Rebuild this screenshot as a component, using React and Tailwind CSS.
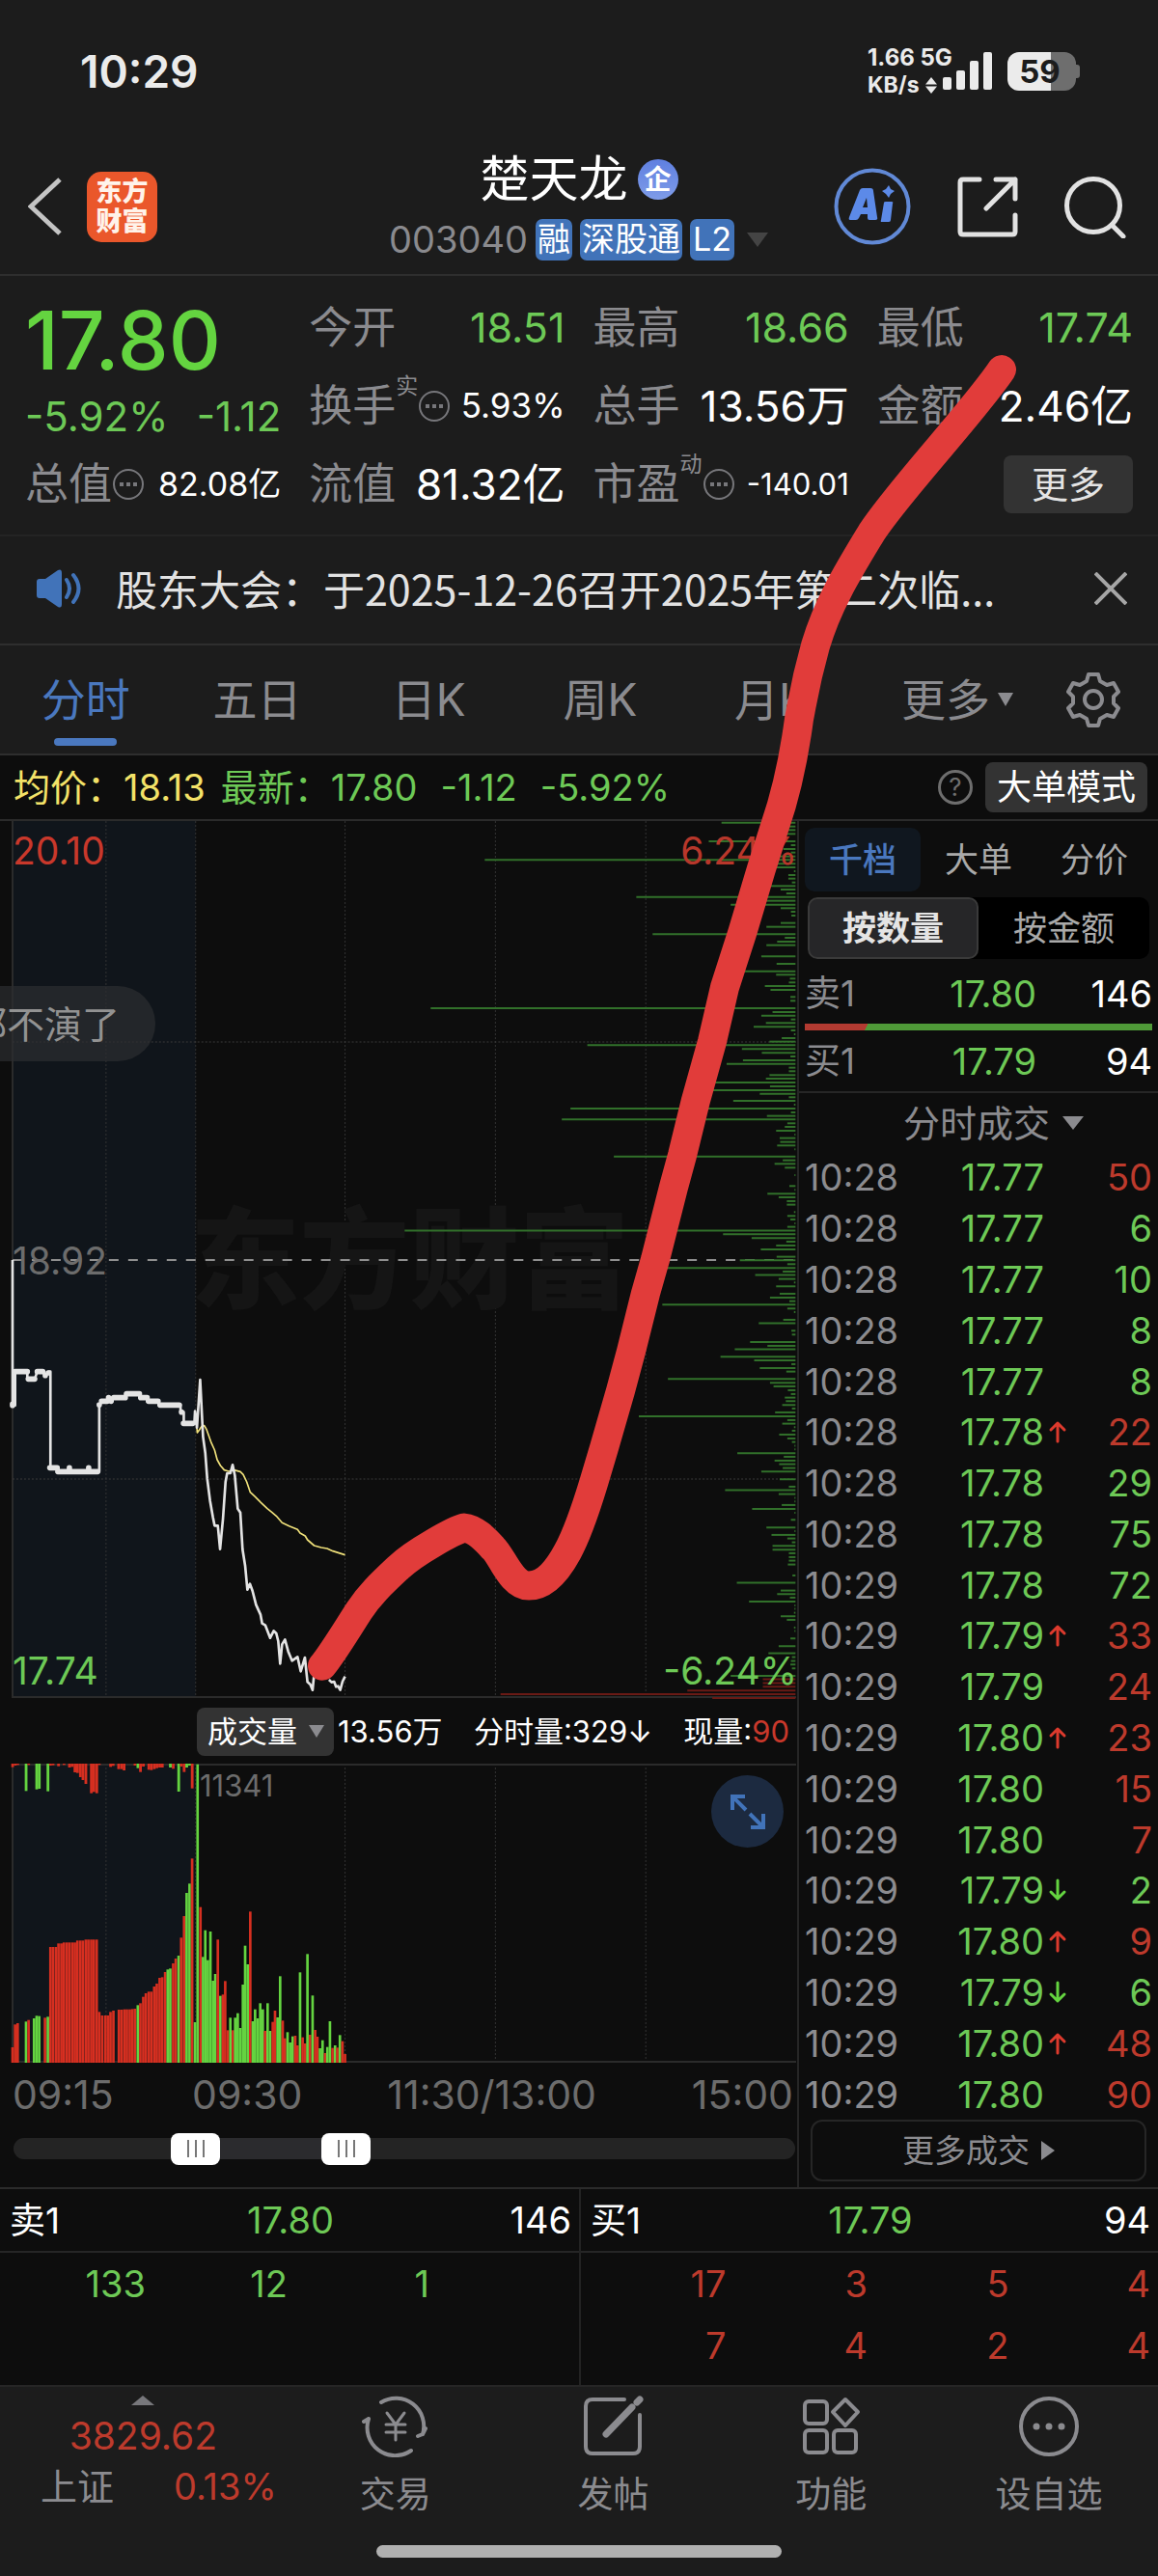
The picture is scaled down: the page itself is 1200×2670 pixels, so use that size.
import React from "react";

const GREEN = "#64d440";
const RED = "#d62f20";

/* Order depth drawn from the right edge: [row, bar start]. */
const depthGreen = [
  [35, 1414], [47, 1545], [58, 1545], [70, 1530], [93, 1389], [105, 1550], [117, 1535], [128, 1550], [140, 1520], [151, 950],
  [163, 1490], [174, 1522], [186, 1556], [198, 1545], [209, 1545], [221, 1552], [232, 1511], [243, 1530], [255, 1541], [266, 1247],
  [278, 1500], [290, 1432], [301, 1530], [312, 1550], [324, 1551], [347, 1530], [359, 1502], [382, 1279], [393, 1538], [405, 1523],
  [416, 1502], [451, 1492], [474, 1522], [497, 1430], [508, 1521], [520, 1548], [532, 1546], [543, 1499], [555, 1510], [577, 1549],
  [589, 1549], [612, 844], [624, 1514], [635, 1492], [647, 1550], [658, 1501], [670, 1477], [681, 1550], [693, 1556], [705, 1532],
  [716, 1508], [727, 1151], [739, 1454], [751, 1493], [762, 1549], [774, 1456], [785, 1424], [797, 1546], [808, 1546], [820, 1508],
  [831, 1501], [843, 1390], [855, 1509], [867, 1380], [878, 1489], [889, 1546], [900, 1437], [912, 1556], [924, 1118], [936, 1550],
  [947, 1503], [958, 1101], [970, 1543], [981, 1538], [993, 1521], [1005, 1557], [1016, 1528], [1028, 1529], [1039, 1523], [1051, 1557],
  [1073, 1203], [1085, 1534], [1096, 1518], [1108, 1538], [1131, 1557], [1165, 1547], [1177, 1557], [1189, 1504], [1200, 1526],
  [1212, 1542], [1223, 1542], [1246, 1556], [1258, 1543], [1269, 1549], [1281, 1557], [1292, 1543], [1304, 793], [1315, 1417],
  [1327, 1473], [1338, 1541], [1350, 1521], [1362, 1491], [1385, 1522], [1396, 1450], [1408, 1543], [1420, 1306], [1431, 1534],
  [1442, 1480], [1454, 1526], [1465, 1556], [1477, 1521], [1500, 1528], [1512, 1509], [1523, 1547], [1534, 1298], [1546, 1543],
  [1557, 1556], [1581, 1535], [1592, 1487], [1615, 1551], [1627, 1552], [1650, 1470], [1662, 1504], [1673, 1440], [1696, 1412],
  [1707, 1478], [1719, 1551], [1731, 1489], [1742, 1541], [1765, 1309], [1777, 1509], [1788, 1516], [1800, 1544], [1812, 1550],
  [1823, 1538], [1834, 1540], [1846, 1533], [1857, 1552], [1869, 1519], [1881, 1252], [1893, 1543], [1904, 1533], [1915, 1556],
  [1926, 1552], [1938, 1527], [1950, 1543], [1961, 1552], [1973, 1557], [1984, 1557], [1996, 1445], [2007, 1536], [2019, 1518],
  [2030, 1527], [2042, 1534], [2053, 1492], [2077, 1528], [2100, 1546], [2111, 1421], [2123, 1526], [2135, 1557], [2146, 1557],
  [2157, 1532], [2169, 1474], [2181, 1557], [2203, 1550], [2227, 1502], [2238, 1557], [2250, 1512], [2261, 1543], [2273, 1552],
  [2284, 1514], [2296, 1514], [2307, 1546], [2319, 1546], [2330, 1546], [2342, 1544], [2376, 1553], [2399, 1444], [2423, 1530],
  [2434, 1523], [2445, 1548], [2457, 1468], [2469, 1557], [2480, 1557], [2492, 1556], [2503, 1530], [2514, 1542], [2538, 1556],
  [2549, 1557], [2572, 1549], [2596, 1526], [2618, 1506], [2630, 1552], [2642, 1550], [2653, 1549], [2665, 1552], [2688, 1432],
];
const depthRed = [[2699, 1495], [2711, 1495], [2722, 1495], [2734, 1347], [2745, 981], [2757, 1396]];

/* Volume bars: [x, top, colour]. */
const volume = [
  [35, 918, "r"], [43, 847, "r"], [51, 843, "r"], [77, 838, "g"], [85, 833, "r"], [102, 828, "g"], [110, 820, "g"], [118, 821, "g"],
  [136, 826, "r"], [145, 823, "g"], [153, 606, "r"], [161, 606, "r"], [170, 606, "r"], [178, 595, "r"], [187, 595, "r"], [195, 592, "r"],
  [204, 592, "r"], [212, 592, "r"], [221, 592, "r"], [229, 592, "r"], [237, 586, "r"], [246, 586, "r"], [254, 586, "r"], [263, 583, "r"],
  [271, 583, "r"], [280, 583, "r"], [288, 583, "r"], [297, 583, "r"], [305, 808, "r"], [314, 819, "r"], [324, 819, "r"], [332, 819, "r"],
  [340, 808, "r"], [349, 804, "r"], [366, 801, "r"], [374, 801, "r"], [383, 800, "r"], [391, 800, "r"], [400, 800, "r"], [408, 799, "r"],
  [416, 798, "r"], [425, 787, "g"], [433, 781, "r"], [442, 761, "r"], [450, 750, "r"], [459, 745, "r"], [467, 745, "r"], [476, 729, "r"],
  [484, 720, "r"], [493, 702, "r"], [501, 700, "r"], [510, 684, "r"], [518, 676, "g"], [526, 673, "g"], [535, 657, "r"], [543, 642, "r"],
  [552, 633, "g"], [560, 577, "r"], [569, 510, "r"], [577, 438, "g"], [586, 409, "g"], [594, 331, "r"], [603, 840, "g"], [611, 38, "g"],
  [620, 482, "r"], [628, 637, "g"], [635, 554, "g"], [643, 647, "g"], [651, 558, "g"], [659, 711, "g"], [666, 690, "g"], [674, 583, "r"],
  [682, 758, "g"], [690, 754, "r"], [697, 712, "r"], [705, 865, "r"], [713, 826, "g"], [721, 865, "r"], [728, 826, "g"], [736, 812, "g"],
  [744, 858, "g"], [752, 723, "g"], [759, 602, "g"], [767, 660, "g"], [775, 496, "r"], [783, 837, "g"], [790, 800, "g"], [798, 828, "g"],
  [806, 781, "g"], [814, 800, "g"], [821, 867, "r"], [829, 781, "g"], [837, 867, "g"], [845, 839, "r"], [852, 804, "r"], [860, 825, "g"],
  [868, 697, "g"], [876, 835, "r"], [883, 890, "r"], [891, 871, "g"], [899, 903, "g"], [907, 884, "g"], [915, 882, "r"], [922, 912, "r"],
  [930, 685, "g"], [938, 887, "r"], [946, 906, "r"], [953, 628, "g"], [961, 879, "r"], [969, 757, "g"], [977, 864, "r"], [984, 885, "r"],
  [992, 921, "g"], [1000, 896, "g"], [1008, 936, "r"], [1015, 917, "g"], [1023, 837, "g"], [1031, 920, "r"], [1039, 912, "g"],
  [1046, 919, "r"], [1054, 880, "g"], [1062, 899, "r"], [1070, 939, "r"],
];
/* Unmatched auction volume hanging from the top: [x, bottom, colour]. */
const unmatched = [
  [35, 47, "r"], [43, 42, "r"], [51, 40, "r"], [77, 121, "g"], [85, 40, "r"], [110, 116, "g"], [118, 114, "g"], [145, 122, "g"],
  [153, 42, "r"], [161, 41, "r"], [178, 44, "r"], [195, 40, "r"], [212, 48, "r"], [220, 46, "r"], [229, 63, "r"], [237, 65, "r"],
  [246, 78, "r"], [254, 87, "r"], [263, 99, "r"], [280, 128, "r"], [288, 124, "r"], [297, 128, "r"], [305, 40, "r"], [340, 46, "r"],
  [348, 43, "r"], [365, 53, "r"], [374, 53, "r"], [382, 57, "r"], [416, 42, "r"], [425, 50, "g"], [433, 62, "r"], [442, 45, "r"],
  [459, 55, "r"], [467, 56, "r"], [476, 53, "r"], [484, 50, "r"], [493, 48, "r"], [501, 48, "r"], [526, 48, "g"], [535, 52, "r"],
  [552, 123, "g"], [560, 45, "r"], [569, 62, "r"], [577, 48, "g"], [586, 42, "g"], [594, 113, "r"],
];

const trades = [
  ["10:28", "17.77", "", 50, "r"], ["10:28", "17.77", "", 6, "g"], ["10:28", "17.77", "", 10, "g"], ["10:28", "17.77", "", 8, "g"],
  ["10:28", "17.77", "", 8, "g"], ["10:28", "17.78", "up", 22, "r"], ["10:28", "17.78", "", 29, "g"], ["10:28", "17.78", "", 75, "g"],
  ["10:29", "17.78", "", 72, "g"], ["10:29", "17.79", "up", 33, "r"], ["10:29", "17.79", "", 24, "r"], ["10:29", "17.80", "up", 23, "r"],
  ["10:29", "17.80", "", 15, "r"], ["10:29", "17.80", "", 7, "r"], ["10:29", "17.79", "down", 2, "g"], ["10:29", "17.80", "up", 9, "r"],
  ["10:29", "17.79", "down", 6, "g"], ["10:29", "17.80", "up", 48, "r"], ["10:29", "17.80", "", 90, "r"],
];

function StatusBar() {
  return (
    <div className="flex h-[148px] items-center justify-between pl-[83px] pr-[81px] text-[#ebebeb]">
      <span className="text-[46px] font-semibold leading-none">10:29</span>
      <div className="flex items-center">
        <div className="flex w-[92px] flex-col whitespace-nowrap text-[24px] font-bold leading-[28px]">
          <span>1.66 5G</span>
          <span className="flex items-center gap-1.5 text-[23px]">
            KB/s
            <svg width="12" height="17" viewBox="0 0 12 17" fill="currentColor" aria-hidden="true">
              <path d="M6 0 12 7.500H0zM6 17 12 9.500H0z" />
            </svg>
          </span>
        </div>
        <svg className="-ml-3.5 mr-4" width="51" height="40" viewBox="0 0 51 40" fill="currentColor" aria-hidden="true">
          <rect x="0" y="26" width="9" height="13" rx="2" />
          <rect x="14" y="19" width="9" height="20" rx="2" />
          <rect x="28" y="9" width="9" height="30" rx="2" />
          <rect x="42" y="0" width="9" height="39" rx="2" />
        </svg>
        <div className="flex items-center">
          <div className="flex h-10 w-[71px] items-center justify-center rounded-[12px] bg-[linear-gradient(90deg,#ebebeb_63%,#6e6e6e_63%)] pr-1 text-[33px] font-bold leading-none text-[#1c1c1c]">
            59
          </div>
          <div className="h-[14px] w-[4px] rounded-r-[3px] bg-[#6e6e6e]" />
        </div>
      </div>
    </div>
  );
}

function Header() {
  return (
    <header className="grid h-[138px] grid-cols-[1fr_auto_1fr] items-center border-b-2 border-[#2e2e2e] pb-1 pl-[33px] pr-[33px]">
      <div className="-ml-1 flex items-center gap-[26px]">
        <button aria-label="返回">
          <svg width="35" height="60" viewBox="0 0 35 60" fill="none" stroke="#c4c4c4" strokeWidth="5" aria-hidden="true">
            <path d="M33 2 3 30 33 58" />
          </svg>
        </button>
        <a href="#home" className="flex size-[73px] flex-col items-center justify-center rounded-[15px] bg-[#ea572b] text-[27px] font-black leading-[31px] text-[#fff3ea]">
          <span>东方</span>
          <span>财富</span>
        </a>
      </div>
      <div className="flex flex-col items-center pt-1">
        <h1 className="flex items-center gap-[10px] text-[51px] leading-[64px] text-white">
          楚天龙
          <span className="flex size-[42px] items-center justify-center rounded-full bg-linear-to-b from-[#5f7fe0] to-[#7f9ce8] text-[28px] font-bold leading-none">
            企
          </span>
        </h1>
        <div className="flex h-[60px] items-center gap-2 text-[34px] leading-none text-white">
          <span className="text-[38px] text-[#8a8a8e]">003040</span>
          <span className="flex h-[43px] items-center rounded-[7px] bg-[#4173b9] px-[2px]">融</span>
          <span className="flex h-[43px] items-center rounded-[7px] bg-[#4173b9] px-[2px]">深股通</span>
          <span className="flex h-[43px] items-center rounded-[7px] bg-[#4173b9] px-[3px]">L2</span>
          <svg className="ml-1" width="24" height="17" viewBox="0 0 24 17" aria-hidden="true">
            <path d="M1 1h22L12 16z" fill="#444" />
          </svg>
        </div>
      </div>
      <div className="flex items-center justify-end gap-12">
        <button aria-label="Ai">
          <svg width="80" height="80" viewBox="0 0 80 80" aria-hidden="true">
            <circle cx="40" cy="40" r="37.500" fill="none" stroke="#6189d6" strokeWidth="4" />
            <path
              fillRule="evenodd"
              d="M27 23q1-2 3-2h8q3 0 3 3l4 27q1 3-2 3h-6q-2 0-2-2v-4h-7l-2 4q-1 2-3 2h-6q-2 0-1-3zM34 31l-4 10h5zM52 36q0-1 2-1h6q2 0 1 2l-2 17q0 2-2 2h-7q-2 0-1-2zM57 18l2 4 4 2-4 3-2 4-3-4-4-3 4-2z"
              fill="#5c8ae8"
            />
          </svg>
        </button>
        <button aria-label="分享">
          <svg width="63" height="63" viewBox="0 0 63 63" fill="none" stroke="#e2e2e2" strokeWidth="5" strokeLinecap="round" strokeLinejoin="round" aria-hidden="true">
            <path d="M23 3H6Q3 3 3 6v51q0 3 3 3h51q3 0 3-3V40M40 3h20v20M60 3 30 33" />
          </svg>
        </button>
        <button aria-label="搜索">
          <svg width="64" height="65" viewBox="0 0 64 65" fill="none" stroke="#e2e2e2" strokeWidth="5" strokeLinecap="round" aria-hidden="true">
            <circle cx="30" cy="31" r="27.500" />
            <path d="M49 51 61 63" />
          </svg>
        </button>
      </div>
    </header>
  );
}

function Dots() {
  return (
    <svg className="shrink-0" width="34" height="34" viewBox="0 0 34 34" aria-hidden="true">
      <circle cx="17" cy="17" r="15" fill="none" stroke="#77777b" strokeWidth="2" />
      <path d="M8 15h4v4H8zM15 15h4v4h-4zM22 15h4v4h-4z" fill="#77777b" />
    </svg>
  );
}

function Stat({ label, sup, dots, value, tone = "text-white", size = "text-[43px]" }) {
  return (
    <div className="flex h-[81px] items-center justify-between whitespace-nowrap">
      <dt className="flex items-center text-[45px] leading-none text-[#8b8b8f]">
        {label}
        {sup && <span className="-mt-10 text-[23px]">{sup}</span>}
        {dots && <Dots />}
      </dt>
      <dd className={`leading-none ${size} ${tone}`}>{value}</dd>
    </div>
  );
}

function Quote() {
  return (
    <section className="grid grid-cols-4 gap-x-[29px] border-b-2 border-[#242424] px-[26px] pb-[12px] pt-[13px]">
      <div>
        <div className="flex h-[104px] items-center pt-1 text-[84px] font-medium leading-none text-[#64d440]">17.80</div>
        <div className="flex h-[58px] items-center justify-between text-[42px] leading-none text-[#6dc956]">
          <span>-5.92%</span>
          <span>-1.12</span>
        </div>
        <dl>
          <Stat label="总值" dots value="82.08亿" size="text-[34px]" />
        </dl>
      </div>
      <dl>
        <Stat label="今开" value="18.51" tone="text-[#6dc956]" />
        <Stat label="换手" sup="实" dots value="5.93%" size="text-[35px]" />
        <Stat label="流值" value="81.32亿" size="text-[44px]" />
      </dl>
      <dl>
        <Stat label="最高" value="18.66" tone="text-[#6dc956]" />
        <Stat label="总手" value="13.56万" size="text-[44px]" />
        <Stat label="市盈" sup="动" dots value="-140.01" size="text-[31px]" />
      </dl>
      <div>
        <dl>
          <Stat label="最低" value="17.74" tone="text-[#6dc956]" />
          <Stat label="金额" value="2.46亿" size="text-[44px]" />
        </dl>
        <div className="flex h-[81px] items-center justify-end">
          <button className="h-[60px] w-[134px] rounded-lg bg-[#333] text-[38px] leading-none text-[#e4e4e4]">更多</button>
        </div>
      </div>
    </section>
  );
}

function Notice() {
  return (
    <section className="flex h-[113px] items-center border-b-2 border-[#2e2e2e] pb-1 pl-9 pr-8">
      <svg className="shrink-0" width="50" height="42" viewBox="0 0 50 42" aria-hidden="true">
        <path d="M2 14q0-3 3-3h6L24 2q4-2 4 3v32q0 5-4 3l-13-9H5q-3 0-3-3z" fill="#4173b9" />
        <path d="M33 12q6 9 0 18M40 7q11 14 0 28" fill="none" stroke="#4173b9" strokeWidth="4" strokeLinecap="round" />
      </svg>
      <p className="ml-[34px] grow whitespace-nowrap font-['Noto_Sans_CJK_SC',sans-serif] text-[43px] leading-none text-[#e2e2e2]">
        股东大会：于2025-12-26召开2025年第二次临...
      </p>
      <button aria-label="关闭">
        <svg width="34" height="34" viewBox="0 0 34 34" stroke="#a6a6a6" strokeWidth="4" aria-hidden="true">
          <path d="M1 1 33 33M33 1 1 33" />
        </svg>
      </button>
    </section>
  );
}

function PeriodTabs() {
  return (
    <nav className="grid h-[114px] grid-cols-[repeat(6,1fr)_134px] items-stretch border-b-2 border-[#2e2e2e] text-[46px] leading-none text-[#8b8b8f]">
      <button className="relative flex items-center justify-center text-[#4a78bf]">
        分时
        <span className="absolute bottom-2 h-2 w-[65px] rounded bg-[#4a78bf]" />
      </button>
      <button>五日</button>
      <button>日K</button>
      <button>周K</button>
      <button>月K</button>
      <button className="flex items-center justify-end gap-2 pr-4">
        更多
        <svg width="16" height="14" viewBox="0 0 16 14" aria-hidden="true">
          <path d="M0 0h16L8 14z" fill="#8b8b8f" />
        </svg>
      </button>
      <button aria-label="设置" className="flex items-center justify-center">
        <svg width="56" height="58" viewBox="0 0 56 58" fill="none" stroke="#8b8b8f" strokeWidth="4" strokeLinejoin="round" aria-hidden="true">
          <path d="M23 3h10l2 7 7 4 7-2 5 9-5 5v7l5 5-5 9-7-2-7 4-2 7H23l-2-7-7-4-7 2-5-9 5-5v-7l-5-5 5-9 7 2 7-4z" />
          <circle cx="28" cy="29" r="9" />
        </svg>
      </button>
    </nav>
  );
}

function InfoBar() {
  return (
    <div className="flex h-[68px] items-center border-b-2 border-[#2b2b2b] pl-[14px] pr-[11px] text-[38px] leading-none">
      <span className="flex text-[#f3e268]">
        均价：<span>18.13</span>
      </span>
      <span className="ml-4 flex grow gap-6 text-[#6dc956]">
        <span className="flex">最新：<span>17.80</span></span>
        <span>-1.12</span>
        <span>-5.92%</span>
      </span>
      <button aria-label="帮助" className="mr-[13px] flex size-[36px] items-center justify-center rounded-full border-[3px] border-[#6e6e6e] text-[26px] leading-none text-[#6e6e6e]">
        ?
      </button>
      <button className="h-[52px] rounded-lg bg-[#333] px-3 text-[36px] leading-none text-white">大单模式</button>
    </div>
  );
}

function Grid({ height, rows }) {
  return (
    <>
      <rect x="13" y="0" width="190" height={height} fill="#10151b" />
      <path d={`M13 0V${height}`} stroke="#2b2b2b" strokeWidth="2" />
      <path d={`M110 0V${height}M203 0V${height}M358 0V${height}M514 0V${height}M670 0V${height}`} stroke="#333" strokeWidth="1" strokeDasharray="2 2" />
      {rows.map((y) => (
        <path key={y} d={`M13 ${y}H826`} stroke="#3a3a3a" strokeWidth="1" strokeDasharray="2 2" />
      ))}
      <path d={`M13 ${height - 1}H826`} stroke="#2b2b2b" strokeWidth="2" />
    </>
  );
}

function PriceChart() {
  return (
    <div className="relative h-[910px] text-[39px] leading-none">
      <svg className="absolute inset-0 size-full" viewBox="0 0 827 910" preserveAspectRatio="none" aria-label="分时走势" role="img">
        <Grid height={909} rows={[229, 682]} />
        <text x="425" y="496" textAnchor="middle" fontSize="114" fontWeight="900" fill="#151515">
          东方财富
        </text>
        <path d="M13 455H826" stroke="#8f8f8f" strokeWidth="2" strokeDasharray="10 10" />
        <g transform="translate(0 -10) scale(.5294 .3333)">
          {depthGreen.map(([y, x]) => (
            <path key={y} d={`M${x} ${y}H1559`} stroke="#31702a" strokeWidth="6" />
          ))}
          {depthRed.map(([y, x]) => (
            <path key={y} d={`M${x} ${y}H1559`} stroke="#6a1a15" strokeWidth="6" />
          ))}
        </g>
        <g transform="translate(0 550) scale(.33333)" fill="none" strokeLinejoin="round">
          <path
            d="M611 215 614 252 620 244 628 232 636 230 643 242 650 262 658 284 668 306 676 336 686 354 698 368 712 372 728 368 748 373 757 382 768 405 779 437 795 452 812 469 832 488 846 499 860 511 878 532 900 542 926 553 934 564 950 573 957 585 978 603 1000 609 1018 612 1036 620 1074 632"
            stroke="#efe07a"
            strokeWidth="5"
          />
          <path
            d="M39-285V167H47V62H85V85H108L116 62H133L141 74 152 62H157V361H175L183 373H208L216 361 224 373H267L276 361 284 373H309V167L318 154H330L336 143 344 154 352 143H390V131H435V143H458V154H494V165H562V188H572V223H605L607 185 613 236 623 87 632 265 639 315 645 395 654 465 663 516 668 541H678L685 614 694 520 702 405 707 378H717L724 352 731 385 740 488 748 500 755 615 763 665 770 740 778 722 786 744 797 787 811 818 816 845 826 851 841 890 852 868 860 876 866 900 872 970 878 910 887 895 897 932 909 961 926 949 936 994 949 951 957 1027 966 1035 973 1052 977 1010M1024 1020 1032 1028 1040 1026 1046 1042 1052 1040 1059 1052 1066 1026 1074 1010"
            stroke="#e4e4e4"
            strokeWidth="8"
          />
          <path
            d="M39 163v4M47 62H85M88 85H108M116 62H133M141 74v0M150 66v0M155 361H178M180 373H304M216 361v0M276 361v0M309 165v0M316 154H334M338 143v0M346 154v0M354 143H390M394 131H434M438 143H458M462 154H492M498 166H558M565 188v0M571 223H600"
            stroke="#e4e4e4"
            strokeWidth="17"
            strokeLinecap="round"
          />
        </g>
      </svg>
      <span className="absolute left-[13px] top-[11px] text-[#c9382b]">20.10</span>
      <span className="absolute right-0 top-[11px] text-[#b8372b]">6.24%</span>
      <span className="absolute left-[13px] top-[436px] text-[#6c6c6c]">18.92</span>
      <span className="absolute left-[13px] top-[861px] text-[#6dc956]">17.74</span>
      <span className="absolute right-0 top-[861px] text-[#6dc956]">-6.24%</span>
      <button className="absolute left-0 top-[171px] flex h-[78px] w-[161px] items-center justify-end overflow-hidden whitespace-nowrap rounded-r-full bg-[#2c2d30]/70 pr-[37px] text-[39px] leading-none text-[#929292]">
        都不演了
      </button>
    </div>
  );
}

function VolumeHeader() {
  return (
    <div className="flex h-[67px] items-center whitespace-nowrap pl-[204px] pr-2 text-[31px] leading-none text-white">
      <span className="relative flex items-center">
        <select aria-label="指标" className="h-[50px] w-[142px] appearance-none rounded-lg bg-[#333] pl-[11px] leading-none">
          <option>成交量</option>
        </select>
        <svg className="pointer-events-none absolute right-[10px]" width="16" height="13" viewBox="0 0 16 13" aria-hidden="true">
          <path d="M0 0h16L8 13z" fill="#8b8b8f" />
        </svg>
      </span>
      <span className="ml-1">13.56万</span>
      <span className="ml-auto">分时量:329↓</span>
      <span className="ml-auto">
        现量:<span className="text-[#c9382b]">90</span>
      </span>
    </div>
  );
}

function VolumeChart() {
  return (
    <div className="relative h-[310px]">
      <svg className="absolute inset-0 size-full" viewBox="0 0 827 310" preserveAspectRatio="none" role="img" aria-label="成交量">
        <Grid height={310} rows={[]} />
        <path d="M13 1H826" stroke="#2b2b2b" strokeWidth="2" />
        <g transform="translate(0 -12) scale(.33333)">
          {volume.map(([x, y, c]) => (
            <rect key={x} x={x} y={y} width="8" height={966 - y} fill={c === "g" ? GREEN : RED} />
          ))}
          {unmatched.map(([x, y, c]) => (
            <rect key={x} x={x} y="36" width="8.500" height={y - 36} fill={c === "g" ? GREEN : RED} />
          ))}
        </g>
      </svg>
      <span className="absolute left-[207px] top-[7px] text-[31px] leading-none text-[#6c6c6c]">11341</span>
      <button aria-label="全屏" className="absolute right-[14px] top-[12px] flex size-[75px] items-center justify-center rounded-full bg-[#1c2a40]">
        <svg width="38" height="38" viewBox="0 0 38 38" fill="none" stroke="#4173b9" strokeWidth="4" aria-hidden="true">
          <path d="M16 3H3v14M4 4l13 13M22 35h13V21M34 34 21 21" />
        </svg>
      </button>
    </div>
  );
}

const thumb =
  "pointer-events-none absolute inset-0 h-full w-full appearance-none bg-transparent [&::-webkit-slider-thumb]:pointer-events-auto [&::-webkit-slider-thumb]:h-[33px] [&::-webkit-slider-thumb]:w-[51px] [&::-webkit-slider-thumb]:appearance-none [&::-webkit-slider-thumb]:rounded-lg [&::-webkit-slider-thumb]:bg-white [&::-webkit-slider-thumb]:bg-[linear-gradient(90deg,transparent_17px,#777_17px,#777_19px,transparent_19px,transparent_25px,#777_25px,#777_27px,transparent_27px,transparent_33px,#777_33px,#777_35px,transparent_35px)] [&::-webkit-slider-thumb]:bg-[length:100%_18px] [&::-webkit-slider-thumb]:bg-center [&::-webkit-slider-thumb]:bg-no-repeat";

function ChartColumn() {
  return (
    <div className="border-r-2 border-[#262626]">
      <PriceChart />
      <VolumeHeader />
      <VolumeChart />
      <div className="grid h-[66px] grid-cols-[23%_25%_1fr_auto] items-center pl-[13px] pr-1 text-[41px] leading-none text-[#6c6c6c]">
        <span>09:15</span>
        <span>09:30</span>
        <span>11:30/13:00</span>
        <span>15:00</span>
      </div>
      <div className="relative my-[6px] ml-[14px] mr-[2px] flex h-[34px] items-center">
        <div className="h-[22px] w-full rounded-full bg-[linear-gradient(90deg,#242424_23%,#2b2b2e_23%,#2b2b2e_43%,#242424_43%)]" />
        <input type="range" aria-label="起始时间" min="0" max="1000" defaultValue="215" className={thumb} />
        <input type="range" aria-label="结束时间" min="0" max="1000" defaultValue="420" className={thumb} />
      </div>
    </div>
  );
}

function Arrow({ dir }) {
  const up = dir === "up";
  return (
    <svg className="absolute left-full top-1/2 ml-1 -mt-[13px]" width="20" height="26" viewBox="0 0 20 26" fill="none" stroke={up ? "#dd3a2d" : GREEN} strokeWidth="3" strokeLinecap="round" strokeLinejoin="round" aria-label={up ? "上涨" : "下跌"}>
      <path d={up ? "M10 23V4M3 11l7-7 7 7" : "M10 3v19M3 15l7 7 7-7"} />
    </svg>
  );
}

function SidePanel() {
  return (
    <aside className="flex flex-col pb-1.5 leading-none">
      <div className="mx-[6px] mt-[7px] grid h-[66px] grid-cols-3 text-[35px] text-[#a9a9a9]">
        <button className="rounded-[10px] bg-[#10171f] font-medium text-[#4a78bf]">千档</button>
        <button>大单</button>
        <button>分价</button>
      </div>
      <div className="mx-[9px] mt-[6px] grid h-[64px] grid-cols-2 rounded-[10px] bg-black text-[35px] text-[#a9a9a9]">
        <button className="rounded-[10px] border-2 border-[#3a3a3a] bg-[#262628] font-bold text-[#e4e4e4]">按数量</button>
        <button>按金额</button>
      </div>
      <div className="mx-[6px] mt-[4px] text-[38px]">
        <div className="grid h-[63px] grid-cols-3 items-center text-right">
          <span className="text-left text-[37px] text-[#8b8b8f]">卖1</span>
          <span className="text-[#6dc956]">17.80</span>
          <span className="text-white">146</span>
        </div>
        <div className="h-[7px] bg-[linear-gradient(115deg,#b23a31_18%,#4f9a38_18%)]" />
        <div className="grid h-[63px] grid-cols-3 items-center text-right">
          <span className="text-left text-[37px] text-[#8b8b8f]">买1</span>
          <span className="text-[#6dc956]">17.79</span>
          <span className="text-white">94</span>
        </div>
      </div>
      <button className="flex h-[63px] items-center justify-center gap-3 border-t-2 border-[#262626] pl-8 text-[38px] text-[#8b8b8f]">
        分时成交
        <svg width="24" height="16" viewBox="0 0 24 16" aria-hidden="true">
          <path d="M1 1h22L12 15z" fill="#8b8b8f" />
        </svg>
      </button>
      <table className="mx-[6px] h-[1003px] text-[38px]">
        <tbody>
          {trades.map(([time, price, dir, vol, tone], i) => (
            <tr key={i}>
              <td className="p-0 text-left text-[#8b8b8f]">{time}</td>
              <td className="p-0 text-right text-[#6dc956]">
                <span className="relative inline-block">
                  {price}
                  {dir && <Arrow dir={dir} />}
                </span>
              </td>
              <td className={tone === "r" ? "w-[112px] p-0 text-right text-[#bd3a2c]" : "w-[112px] p-0 text-right text-[#6dc956]"}>{vol}</td>
            </tr>
          ))}
        </tbody>
      </table>
      <button className="mx-3 flex h-[64px] items-center justify-center gap-3 rounded-[12px] border-2 border-[#262626] text-[33px] text-[#8b8b8f]">
        更多成交
        <svg width="14" height="20" viewBox="0 0 14 20" aria-hidden="true">
          <path d="M0 0v20l14-10z" fill="#8b8b8f" />
        </svg>
      </button>
    </aside>
  );
}

function QueueSide({ label, price, count, rows, tone }) {
  return (
    <div className="h-[203px] border-l-2 border-[#232323] first:border-l-0">
      <div className="grid h-[66px] grid-cols-[1fr_auto_1fr] items-center border-b-2 border-[#262626] pl-[10px] pr-[8px]">
        <span className="text-[37px] text-white">{label}</span>
        <span className="text-[#6dc956]">{price}</span>
        <span className="text-right text-white">{count}</span>
      </div>
      <div className={`grid grid-cols-4 pl-1 pr-2 text-right ${tone}`}>
        {rows.map((v, i) => (
          <span key={i} className="flex h-[64px] items-center justify-end">{v}</span>
        ))}
      </div>
    </div>
  );
}

function OrderQueue() {
  return (
    <section className="grid grid-cols-2 border-t-2 border-[#2b2b2b] text-[38px] leading-none">
      <QueueSide label="卖1" price="17.80" count="146" rows={[133, 12, 1]} tone="text-[#6dc956]" />
      <QueueSide label="买1" price="17.79" count="94" rows={[17, 3, 5, 4, 7, 4, 2, 4]} tone="text-[#bd3a2c]" />
    </section>
  );
}

function NavItem({ label, children }) {
  return (
    <a href="#nav" className="flex flex-col items-center pt-[9px] text-[37px] leading-none text-[#8b8b8f]">
      <svg width="70" height="64" viewBox="0 0 70 64" fill="none" stroke="currentColor" strokeWidth="4" strokeLinecap="round" strokeLinejoin="round" aria-hidden="true">
        {children}
      </svg>
      <span className="mt-5">{label}</span>
    </a>
  );
}

function BottomBar() {
  return (
    <footer className="border-t-2 border-[#262626] bg-[#1c1c1c]">
      <nav className="grid h-[164px] grid-cols-[297fr_226fr_226fr_226fr_226fr]">
        <a href="#index" className="flex flex-col items-center pt-[9px] leading-none text-[#bd3a2c]">
          <svg width="24" height="10" viewBox="0 0 24 10" aria-hidden="true">
            <path d="M12 0 24 10H0z" fill="#77777b" />
          </svg>
          <span className="mt-3 text-[39px]">3829.62</span>
          <span className="mt-[14px] flex items-center gap-[62px] pl-8 text-[38px]">
            <span className="text-[#8b8b8f]">上证</span>
            <span>0.13%</span>
          </span>
        </a>
        <NavItem label="交易">
          <path d="M20 7A29 29 0 0 1 63 40M63 40l3-6M63 40l-5 2M51 57A29 29 0 0 1 7 24M7 24l-5 3" />
          <path d="M26 18l9 12 9-12M35 30v16M25 30h20M25 38h20" strokeWidth="3" />
        </NavItem>
        <NavItem label="发帖">
          <path d="M47 4H14q-7 0-7 7v42q0 7 7 7h42q7 0 7-7V20" />
          <path d="M28 40 55 12M60 7l3-3" strokeWidth="7" />
        </NavItem>
        <NavItem label="功能">
          <rect x="8" y="6" width="23" height="23" rx="4" />
          <rect x="8" y="36" width="23" height="23" rx="4" />
          <rect x="38" y="36" width="23" height="23" rx="4" />
          <path d="M50 4 63 17 50 31 37 17z" />
        </NavItem>
        <NavItem label="设自选">
          <circle cx="35" cy="32" r="29" />
          <path d="M22 32h0M35 32h0M48 32h0" strokeWidth="7" />
        </NavItem>
      </nav>
      <div className="pb-[20px]">
        <div className="mx-auto h-[13px] w-[35%] rounded-full bg-[#b0b0b0]" />
      </div>
    </footer>
  );
}

function Annotation() {
  return (
    <svg className="pointer-events-none absolute inset-0 size-full" viewBox="0 0 1200 2670" preserveAspectRatio="none" aria-hidden="true">
      <path
        d="M1038 383C1010 425 930 510 903 552 880 590 858 625 845 669 834 708 832 725 828 745 822 790 812 830 803 856L789 900 769 967 751 1023 738 1079 721 1140 707 1197 698 1230 679 1305 669 1340 654 1400 643 1441 626 1500 615 1537C608 1560 598 1590 588 1608 575 1632 562 1643 548 1643 530 1643 520 1612 511 1604 502 1594 492 1584 481 1583 470 1586 430 1608 413 1624 396 1640 383 1652 372 1669 356 1694 344 1714 334 1726"
        fill="none"
        stroke="#e13c3a"
        strokeWidth="30"
        strokeLinecap="round"
        strokeLinejoin="round"
      />
    </svg>
  );
}

export default function App() {
  return (
    <div className="relative min-h-screen bg-[#0d0d0d] font-[Inter,'Noto_Sans_CJK_SC',sans-serif]">
      <div className="bg-[#1c1c1c]">
        <StatusBar />
        <Header />
        <Quote />
        <Notice />
        <PeriodTabs />
      </div>
      <InfoBar />
      <main className="grid grid-cols-[828fr_372fr]">
        <ChartColumn />
        <SidePanel />
      </main>
      <OrderQueue />
      <BottomBar />
      <Annotation />
    </div>
  );
}
